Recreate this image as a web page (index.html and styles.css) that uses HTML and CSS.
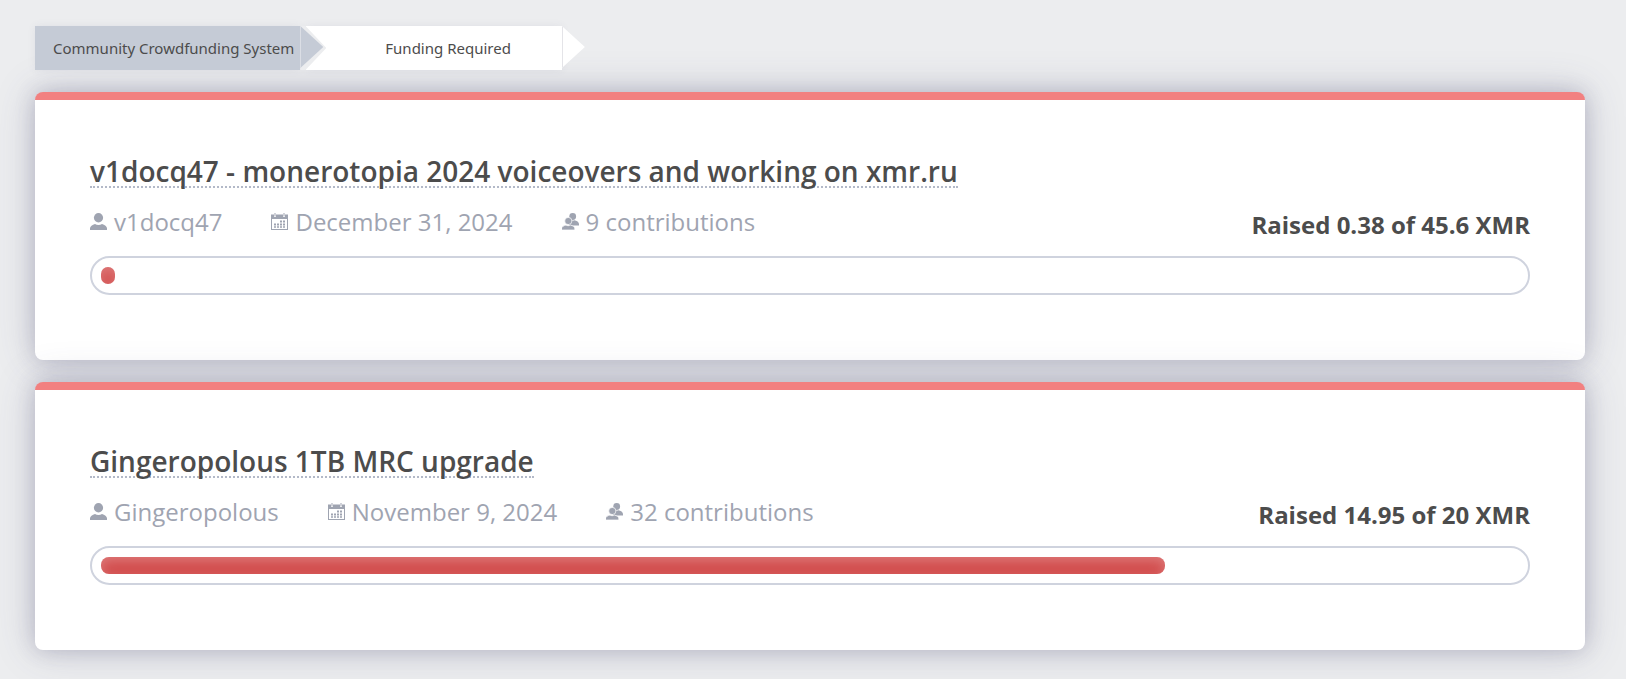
FILE: index.html
```
<!DOCTYPE html>
<html lang="en">
<head>
<meta charset="utf-8">
<meta name="viewport" content="width=device-width, initial-scale=1">
<title>Funding Required</title>
<link rel="stylesheet" href="styles.css">
</head>
<body>
<svg class="sprite" aria-hidden="true">
  <symbol id="user" viewBox="0 0 17 17">
    <ellipse cx="8.500" cy="4.700" rx="4.600" ry="4.700"/>
    <path d="M0 17v-1.800c0-2 2.300-3.400 5-4.300 2 1.300 5 1.300 7 0 2.700.9 5 2.300 5 4.300V17z"/>
  </symbol>
  <symbol id="calendar" viewBox="0 0 17 17">
    <path fill-rule="evenodd" d="M0 1.500h3V4h2V1.500h7V4h2V1.500h3V17H0zM1 6v10h15V6z"/>
    <path d="M3.500 0h1v3.500h-1zM12.500 0h1v3.500h-1z"/>
    <path d="M9 7.500h2v2H9zM12 7.500h2v2h-2zM3 10.500h2v2H3zM6 10.500h2v2H6zM9 10.500h2v2H9zM12 10.500h2v2h-2zM3 13.200h2v1.500H3zM6 13.200h2v1.500H6zM9 13.200h2v1.500H9zM12 13.200h2v1.500h-2z"/>
  </symbol>
  <symbol id="group" viewBox="0 0 17 17">
    <circle cx="10.700" cy="3.500" r="3.400"/>
    <path d="M7 12.500V9.500c.6-1.300 1.700-2 2.800-2.200.8.500 1.700.5 2.400 0 2.700.5 4.800 1.800 4.800 3.700v1.500z"/>
    <circle cx="6.300" cy="8" r="3.600" stroke="#fff" stroke-width=".7"/>
    <path d="M-.5 17v-1.200c0-2 2.200-3.200 4.500-3.700 1.200.8 3.200.8 4.400 0 2.300.5 4.400 1.700 4.400 3.700V17z" stroke="#fff" stroke-width=".7"/>
  </symbol>
</svg>
<main class="page">
  <nav class="crumbs" aria-label="Breadcrumb">
    <a class="crumb crumb-parent" href="#">Community Crowdfunding System</a>
    <a class="crumb crumb-current" href="#" aria-current="page">Funding Required</a>
  </nav>
  <article class="card">
    <h2 class="title"><a class="title-link" href="#">v1docq47 - monerotopia 2024 voiceovers and working on xmr.ru</a></h2>
    <div class="details">
      <ul class="meta">
        <li class="meta-item"><svg class="icon"><use href="#user"/></svg>v1docq47</li>
        <li class="meta-item"><svg class="icon"><use href="#calendar"/></svg>December 31, 2024</li>
        <li class="meta-item"><svg class="icon"><use href="#group"/></svg>9 contributions</li>
      </ul>
      <p class="raised">Raised 0.38 of 45.6 XMR</p>
    </div>
    <div class="progress" role="progressbar" aria-label="Raised" aria-valuenow="1"><div class="fill" style="width:1%"></div></div>
  </article>
  <article class="card">
    <h2 class="title"><a class="title-link" href="#">Gingeropolous 1TB MRC upgrade</a></h2>
    <div class="details">
      <ul class="meta">
        <li class="meta-item"><svg class="icon"><use href="#user"/></svg>Gingeropolous</li>
        <li class="meta-item"><svg class="icon"><use href="#calendar"/></svg>November 9, 2024</li>
        <li class="meta-item"><svg class="icon"><use href="#group"/></svg>32 contributions</li>
      </ul>
      <p class="raised">Raised 14.95 of 20 XMR</p>
    </div>
    <div class="progress" role="progressbar" aria-label="Raised" aria-valuenow="75"><div class="fill" style="width:75%"></div></div>
  </article>
</main>
</body>
</html>
```
FILE: styles.css
```
* { box-sizing: border-box; }
body {
  margin: 0;
  background: #ecedef;
  color: #4c4c4c;
  font-family: "Open Sans", sans-serif;
}
.sprite { display: none; }
.page {
  display: flex;
  flex-direction: column;
  gap: 22px;
  padding: 26px 41px 29px 35px;
}
.crumbs { display: flex; gap: 6px; }
.crumb {
  position: relative;
  height: 44px;
  color: #4c4c4c;
  font-family: "Noto Sans", sans-serif;
  font-size: 15px;
  line-height: 44px;
  text-decoration: none;
  box-shadow: 0 0 8px rgba(80, 80, 120, 0.08);
}
.crumb::before,
.crumb::after {
  content: "";
  position: absolute;
  top: 0;
  left: 100%;
  width: 22px;
  height: 42px;
  clip-path: polygon(0 0, 100% 50%, 0 100%);
}
.crumb-parent { z-index: 1; padding: 0 6px 0 18px; background: #c5cbd6; }
.crumb-parent::before { width: 26px; height: 44px; background: #ecedef; clip-path: polygon(0 0, 20% 0, 100% 50%, 20% 100%, 0 100%); }
.crumb-parent::after { background: #c5cbd6; border-left: 1px solid #dfe2e8; }
.crumb-current { padding: 0 51px 0 79px; background: #fff; }
.crumb-current::after { background: #fff; border-left: 1px solid #e4e4e8; }
.card {
  padding: 55px 55px 65px;
  border-top: 8px solid #f28080;
  border-radius: 8px;
  background: #fff;
  box-shadow: 0 0 40px rgba(70, 70, 110, 0.22), 0 0 20px rgba(70, 70, 110, 0.22);
}
.title {
  margin: 0;
  font-size: 28px;
  font-weight: 600;
  line-height: 32px;
}
.title-link {
  display: block;
  width: fit-content;
  height: 33px;
  border-bottom: 2px dotted #b3b9c8;
  color: inherit;
  text-decoration: none;
}
.details {
  display: flex;
  justify-content: space-between;
  padding: 17px 0 14px;
}
.meta {
  display: flex;
  gap: 49px;
  margin: 0;
  padding: 0;
  list-style: none;
  color: #9fa4b1;
  font-size: 24px;
  line-height: 34px;
}
.meta-item { display: flex; align-items: flex-start; gap: 7px; }
.icon { width: 17px; height: 17px; margin-top: 8px; fill: #9fa4b1; }
.raised {
  margin: 0;
  padding-top: 3px;
  font-size: 24px;
  font-weight: 700;
  line-height: 34px;
}
.progress {
  height: 39px;
  padding: 9px 8px 9px 9px;
  border: 2px solid #cfd3de;
  border-radius: 20px;
}
.fill {
  height: 17px;
  border-radius: 8px;
  background: #d24c4c;
  box-shadow: inset 0 4px 12px rgba(255, 255, 255, 0.25);
}
```
